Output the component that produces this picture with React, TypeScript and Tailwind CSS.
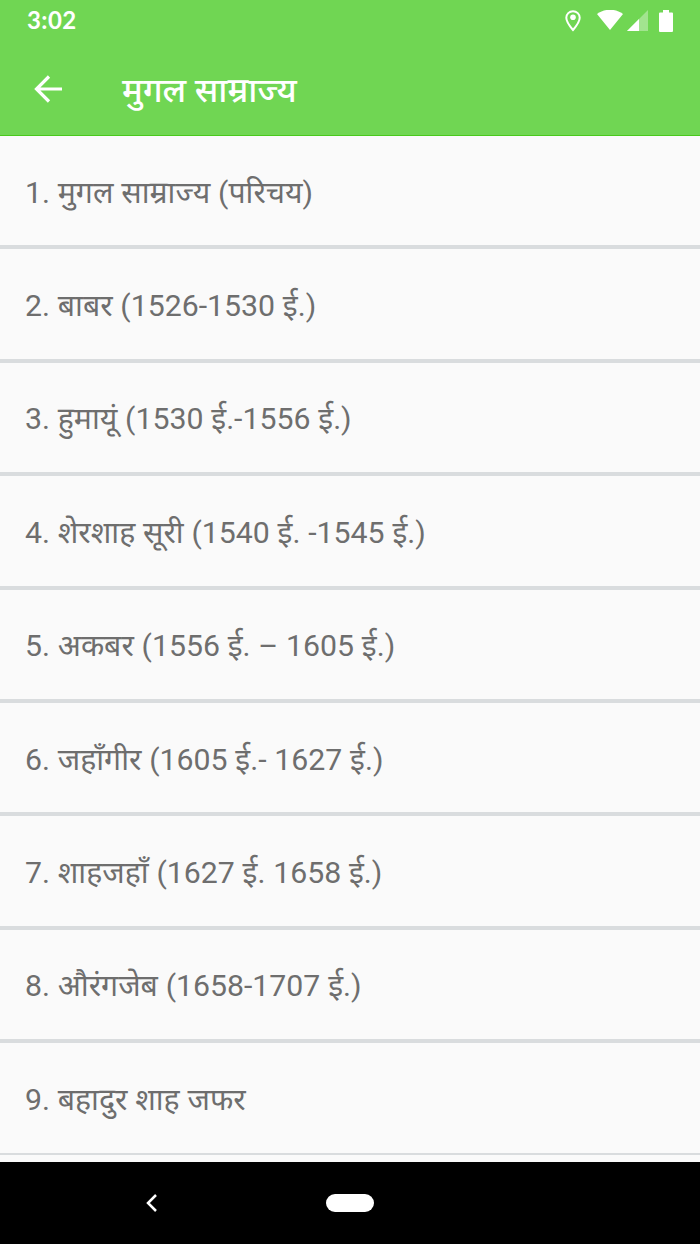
import React from 'react';

const chapters = [
  '1. मुगल साम्राज्य (परिचय)',
  '2. बाबर (1526-1530 ई.)',
  '3. हुमायूं (1530 ई.-1556 ई.)',
  '4. शेरशाह सूरी (1540 ई. -1545 ई.)',
  '5. अकबर (1556 ई. – 1605 ई.)',
  '6. जहाँगीर (1605 ई.- 1627 ई.)',
  '7. शाहजहाँ (1627 ई. 1658 ई.)',
  '8. औरंगजेब (1658-1707 ई.)',
  '9. बहादुर शाह जफर',
];

function StatusBar() {
  return (
    <div className="flex h-[41px] items-center justify-between pl-[27px] pr-[27px]">
      <span className="mb-[2px] font-[Lato,sans-serif] text-[24px] font-bold leading-none tracking-[0.4px]">3:02</span>
      <div className="flex items-center">
        <svg className="mr-[16px] h-[22px] w-[16px]" viewBox="0 0 16 22" fill="none">
          <path d="M8 1.2C4.2 1.2 1.3 4.1 1.3 7.8C1.3 12.3 8 20 8 20S14.7 12.3 14.7 7.8C14.7 4.1 11.8 1.2 8 1.2Z" stroke="white" strokeWidth="2" />
          <circle cx="8" cy="7.3" r="2.8" fill="white" />
        </svg>
        <svg className="mr-[4px] h-[21px] w-[26px]" viewBox="0 0 26 21">
          <path d="M0 4C7.5-1.7 18.5-1.7 26 4L13 20Z" fill="white" />
        </svg>
        <svg className="mr-[11px] h-[21px] w-[21px]" viewBox="0 0 21 21">
          <path d="M0 21L21 0V21Z" fill="white" fillOpacity="0.35" />
          <path d="M0 21L12 9V21Z" fill="white" />
        </svg>
        <svg className="h-[22px] w-[14px]" viewBox="0 0 14 22">
          <path d="M4 0H10V2.5H13Q14 2.5 14 3.5V21Q14 22 13 22H1Q0 22 0 21V3.5Q0 2.5 1 2.5H4Z" fill="white" />
        </svg>
      </div>
    </div>
  );
}

export default function App() {
  return (
    <div className="flex h-[1244px] w-[700px] flex-col overflow-hidden bg-[#fafafa] font-[Roboto,'Noto_Sans',sans-serif]">
      <header className="h-[136px] shrink-0 border-b border-[#49c91c] bg-[#70d653] text-white">
        <StatusBar />
        <div className="flex h-[94px] items-center pl-[34px]">
          <svg className="mt-px h-[28px] w-[28px]" viewBox="0 0 28 28" fill="none" stroke="white" strokeWidth="3.2">
            <path d="M28 14H3M15 1.5L2.5 14L15 26.5" />
          </svg>
          <h1 className="ml-[60px] mt-[3px] whitespace-nowrap text-[34px] font-medium leading-none">मुगल साम्राज्य</h1>
        </div>
      </header>

      <main className="min-h-0 flex-1">
        {chapters.map((chapter) => (
          <div
            key={chapter}
            className="flex h-[113.4px] items-center border-b-4 border-[#d9dcde] pl-[25px] pt-[4px] last:h-[112px] last:border-b-2 last:pt-[3px]"
          >
            <span className="whitespace-nowrap text-[30.25px] leading-none text-[#6e6e6e] [font-kerning:none] [word-spacing:0.3px]">{chapter}</span>
          </div>
        ))}
      </main>

      <nav className="flex h-[82px] shrink-0 items-center bg-black">
        <svg className="ml-[146px] h-[18px] w-[11px]" viewBox="0 0 11 18" fill="none" stroke="white" strokeWidth="2.5">
          <path d="M10 1L2 9L10 17" />
        </svg>
        <div className="ml-[169px] h-[18px] w-[48px] rounded-full bg-white" />
      </nav>
    </div>
  );
}
